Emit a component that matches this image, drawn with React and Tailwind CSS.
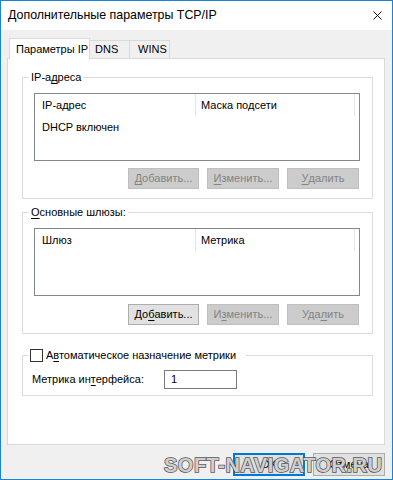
import React from "react";

const font = { fontFamily: '"Liberation Sans", Arial, sans-serif' };

function Btn({ children, disabled, def, w = "w-[71px]" }) {
  let cls = "h-[21px] flex items-center justify-center text-[11px] leading-none whitespace-nowrap border ";
  if (disabled) cls += "bg-[#cccccc] border-[#bfbfbf] text-[#838383]";
  else if (def) cls += "bg-[#e1e1e1] border-2 border-[#0078d7] text-black";
  else cls += "bg-[#e1e1e1] border-[#adadad] text-black";
  return <div className={`${cls} ${w}`}>{children}</div>;
}

function U({ children }) {
  return <span className="underline underline-offset-2">{children}</span>;
}

function ListBox({ col1, col2, rows = [] }) {
  return (
    <div className="w-[326px] h-[68px] border border-[#828790] bg-white flex flex-col">
      <div className="flex h-[22px] items-center text-[11px]">
        <div className="w-[161px] pl-[7px] h-full flex items-center border-r border-[#e5e5e5]">{col1}</div>
        <div className="w-[159px] pl-[5px] h-full flex items-center border-r border-[#e5e5e5]">{col2}</div>
      </div>
      {rows.map((r) => (
        <div key={r} className="flex h-[22px] items-center text-[11px] pl-[7px]">{r}</div>
      ))}
    </div>
  );
}

export default function App() {
  return (
    <div style={font} className="relative w-[393px] h-[480px] border border-[#1883d7] flex flex-col text-black bg-[#f0f0f0] overflow-hidden">
      {/* title bar */}
      <div className="h-[29px] bg-white flex items-center justify-between pl-[7px] pr-[9px] shrink-0">
        <span className="text-[12.4px] whitespace-nowrap">Дополнительные параметры TCP/IP</span>
        <svg width="9" height="9" viewBox="0 0 9 9" className="mr-[1px]">
          <path d="M0.5 0.5 L8.5 8.5 M8.5 0.5 L0.5 8.5" stroke="#111" strokeWidth="1" />
        </svg>
      </div>

      {/* body */}
      <div className="flex-1 flex flex-col pl-[6px] pt-[8px]">
        {/* tabs */}
        <div className="flex items-end h-[20px] pl-[2px] relative z-10">
          <div className="w-[81px] h-[21px] -mb-px bg-white border border-b-0 border-[#d9d9d9] flex items-center pl-[6px] text-[11px] whitespace-nowrap">
            Параметры IP
          </div>
          <div className="w-[40px] h-[18px] bg-[#f0f0f0] border border-l-0 border-b-0 border-[#d9d9d9] flex items-center pl-[5px] text-[11px]">
            DNS
          </div>
          <div className="w-[40px] h-[18px] bg-[#f0f0f0] border border-l-0 border-b-0 border-[#d9d9d9] flex items-center pl-[8px] text-[11px]">
            WINS
          </div>
        </div>

        {/* panel */}
        <div className="w-[378px] h-[387px] bg-white border border-[#d9d9d9] flex flex-col pl-[14px] pt-[10px] text-[11px]">
          {/* group 1 */}
          <fieldset className="w-[351px] border border-[#dcdcdc] p-0">
            <legend className="ml-[6px] px-[2px] leading-[16px]">
              IP-а<U>д</U>реса
            </legend>
            <div className="pl-[11px] pt-[8px] pb-[9px]">
              <ListBox col1="IP-адрес" col2="Маска подсети" rows={["DHCP включен"]} />
              <div className="flex justify-end gap-[8px] pr-[13px] mt-[7px]">
                <Btn disabled><U>Д</U>обавить...</Btn>
                <Btn disabled w="w-[72px]"><U>И</U>зменить...</Btn>
                <Btn disabled w="w-[72px]"><U>У</U>далить</Btn>
              </div>
            </div>
          </fieldset>

          {/* group 2 */}
          <fieldset className="w-[351px] border border-[#dcdcdc] p-0 mt-[5px]">
            <legend className="ml-[6px] px-[2px] leading-[16px]">
              <U>О</U>сновные шлюзы:
            </legend>
            <div className="pl-[11px] pt-[8px] pb-[8px]">
              <ListBox col1="Шлюз" col2="Метрика" />
              <div className="flex justify-end gap-[8px] pr-[13px] mt-[8px]">
                <Btn>До<U>б</U>авить...</Btn>
                <Btn disabled w="w-[72px]">И<U>з</U>менить...</Btn>
                <Btn disabled w="w-[72px]">Уда<U>л</U>ить</Btn>
              </div>
            </div>
          </fieldset>

          {/* group 3 */}
          <fieldset className="w-[351px] border border-[#dcdcdc] p-0 mt-[13px]">
            <legend className="ml-[6px] pl-[1px] pr-[10px] leading-[16px] flex items-center gap-[3px]">
              <span className="w-[13px] h-[13px] border border-[#333] bg-white inline-block"></span>
              <span>А<U>в</U>томатическое назначение метрики</span>
            </legend>
            <div className="pl-[9px] pt-[7px] pb-[6px] flex items-center">
              <span className="w-[132px] whitespace-nowrap">Метрика ин<U>т</U>ерфейса:</span>
              <div className="w-[73px] h-[19px] border border-[#7a7a7a] bg-white flex items-center pl-[6px]">1</div>
            </div>
          </fieldset>
        </div>

        {/* bottom buttons */}
        <div className="w-[378px] flex justify-end gap-[8px] mt-[8px]">
          <Btn def w="w-[72px] h-[23px]">OK</Btn>
          <Btn w="w-[72px] h-[23px]">Отмена</Btn>
        </div>
      </div>

      {/* watermark overlay */}
      <div className="absolute left-[163px] top-[454px] text-[20px] font-bold leading-none tracking-[0.5px] text-[#cfcfcf] [-webkit-text-stroke:1.5px_#555] [paint-order:stroke_fill] pointer-events-none whitespace-nowrap">
        SOFT-NAVIGATOR.RU
      </div>
    </div>
  );
}
